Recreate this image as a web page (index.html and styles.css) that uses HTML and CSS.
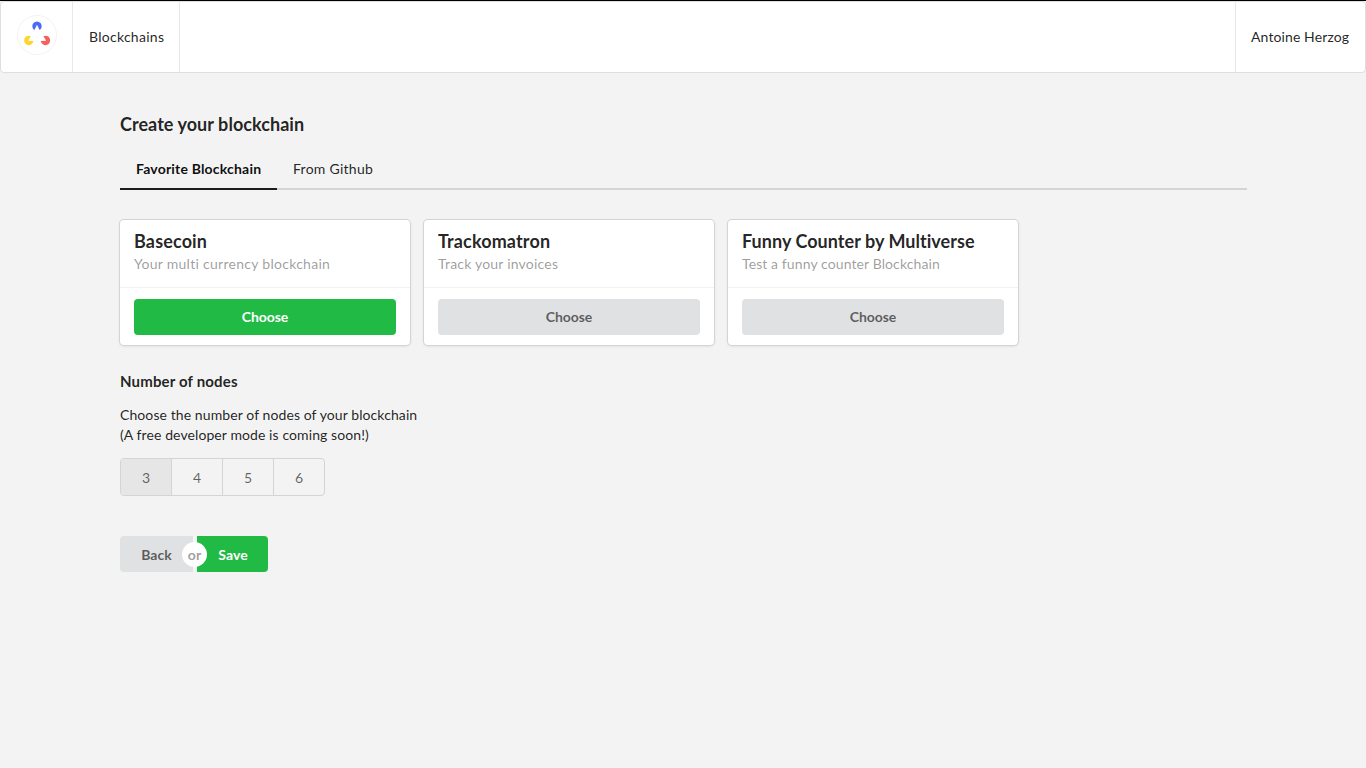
FILE: index.html
```html
<!DOCTYPE html>
<html lang="en">
<head>
<meta charset="utf-8">
<title>Create your blockchain</title>
<link rel="stylesheet" href="styles.css">
</head>
<body>
<nav class="menu">
  <a class="logo">
    <svg width="40" height="40" viewBox="0 0 40 40">
      <circle cx="20" cy="20" r="19.5" fill="#fff" stroke="#f2f2f2"/>
      <path d="M20 9.8L17.4 15A4.7 4.7 0 1 1 22.6 15Z" fill="#4c6af5"/>
      <path d="M11.1 25.8L16.5 26A4.7 4.7 0 1 1 13.9 21.2Z" fill="#fdd52f"/>
      <path d="M29.2 25.8L26.4 21.2A4.7 4.7 0 1 1 23.8 26Z" fill="#f4615f"/>
    </svg>
  </a>
  <a class="menu-item">Blockchains</a>
  <a class="menu-item user">Antoine Herzog</a>
</nav>
<main class="container">
  <h1 class="title">Create your blockchain</h1>
  <div class="tabs">
    <a class="tab active">Favorite Blockchain</a>
    <a class="tab">From Github</a>
  </div>
  <div class="cards">
    <section class="card basecoin">
      <div class="content"><h2 class="name">Basecoin</h2><p class="meta">Your multi currency blockchain</p></div>
      <div class="extra"><button class="button green">Choose</button></div>
    </section>
    <section class="card trackomatron">
      <div class="content"><h2 class="name">Trackomatron</h2><p class="meta">Track your invoices</p></div>
      <div class="extra"><button class="button">Choose</button></div>
    </section>
    <section class="card counter">
      <div class="content"><h2 class="name">Funny Counter by Multiverse</h2><p class="meta">Test a funny counter Blockchain</p></div>
      <div class="extra"><button class="button">Choose</button></div>
    </section>
  </div>
  <h3 class="subtitle">Number of nodes</h3>
  <p class="hint">Choose the number of nodes of your blockchain<br>(A free developer mode is coming soon!)</p>
  <div class="nodes">
    <button class="node selected">3</button>
    <button class="node">4</button>
    <button class="node">5</button>
    <button class="node">6</button>
  </div>
  <div class="actions">
    <button class="button back">Back</button>
    <span class="gap"><span class="or">or</span></span>
    <button class="button green save">Save</button>
  </div>
</main>
</body>
</html>
```

FILE: styles.css
```css
* { box-sizing: border-box; }
body {
  margin: 0;
  min-height: 768px;
  border-top: 1px solid #000;
  background: #f3f3f3;
  color: rgba(0, 0, 0, .87);
  font: 14px/20px Lato, "Liberation Sans", sans-serif;
  font-variant-ligatures: none;
}
h1, h2, h3, p { margin: 0; }
button { border: 0; padding: 0; font-family: inherit; }

.menu {
  display: flex;
  height: 72px;
  background: #fff;
  border: 1px solid #dededf;
  border-radius: 4px;
}
.logo {
  width: 72px;
  padding: 13px 16px 0;
  border-right: 1px solid #e8e8e8;
}
.logo svg { display: block; }
.menu-item {
  display: flex;
  align-items: center;
  width: 107px;
  padding: 0 0 0 16px;
  border-right: 1px solid #e8e8e8;
  letter-spacing: .27px;
}
.user {
  width: 130px;
  margin-left: auto;
  padding: 0 0 0 15px;
  border-right: 0;
  border-left: 1px solid #e8e8e8;
  letter-spacing: .11px;
}

.container { width: 1127px; margin-left: 120px; padding-top: 40px; }
.title { font-size: 18px; line-height: 23px; font-weight: 700; letter-spacing: .05px; }
.tabs {
  display: flex;
  height: 40px;
  margin-top: 14px;
  border-bottom: 2px solid #d4d4d5;
}
.tab { height: 40px; padding: 9px 16px 0; letter-spacing: .27px; white-space: nowrap; }
.active {
  width: 157px;
  border-bottom: 2px solid #1b1c1d;
  color: rgba(0, 0, 0, .95);
  font-weight: 700;
  letter-spacing: .19px;
}

.cards { display: flex; gap: 14px; margin-top: 30px; }
.card {
  width: 290px;
  height: 125px;
  background: #fff;
  border-radius: 4px;
  box-shadow: 0 1px 3px 0 #d4d4d5, 0 0 0 1px #d4d4d5;
}
.content { height: 67px; padding: 10px 14px 0; }
.name { font-size: 18px; line-height: 23px; font-weight: 700; }
.meta { color: rgba(0, 0, 0, .4); line-height: 22px; }
.basecoin .name { letter-spacing: .15px; }
.basecoin .meta { letter-spacing: .28px; }
.trackomatron .name { letter-spacing: .13px; }
.trackomatron .meta { letter-spacing: .21px; }
.counter .name { letter-spacing: .04px; }
.counter .meta { letter-spacing: .1px; }
.extra { padding: 11px 14px; border-top: 1px solid #f2f2f2; }
.button {
  display: block;
  width: 100%;
  height: 36px;
  padding-bottom: 2px;
  border-radius: 4px;
  background: #e0e1e2;
  color: rgba(0, 0, 0, .6);
  font-size: 14px;
  font-weight: 700;
  letter-spacing: -.1px;
}
.green { background: #21ba45; color: #fff; }

.subtitle { margin-top: 26px; font-size: 15px; line-height: 20px; letter-spacing: .16px; }
.hint { margin-top: 14px; letter-spacing: .09px; }
.nodes {
  display: flex;
  width: 205px;
  height: 38px;
  margin-top: 13px;
  border: 1px solid #d4d4d5;
  border-radius: 4px;
  overflow: hidden;
}
.node {
  width: 51px;
  background: transparent;
  border-left: 1px solid #d4d4d5;
  color: rgba(0, 0, 0, .6);
  font-size: 14px;
}
.node:first-child { border-left: 0; width: 50px; }
.selected { background: #e6e6e6; }

.actions { display: flex; margin-top: 40px; }
.back { width: 73px; border-radius: 4px 0 0 4px; padding: 0; letter-spacing: .05px; }
.save { width: 71px; border-radius: 0 4px 4px 0; padding: 0 0 0 1px; letter-spacing: .05px; }
.gap { position: relative; width: 4px; background: #f7f7f7; }
.or {
  position: absolute;
  top: 6px;
  left: -11px;
  width: 25px;
  height: 25px;
  border-radius: 50%;
  background: #fff;
  color: rgba(0, 0, 0, .4);
  font-weight: 700;
  line-height: 26px;
  text-align: center;
}
```
